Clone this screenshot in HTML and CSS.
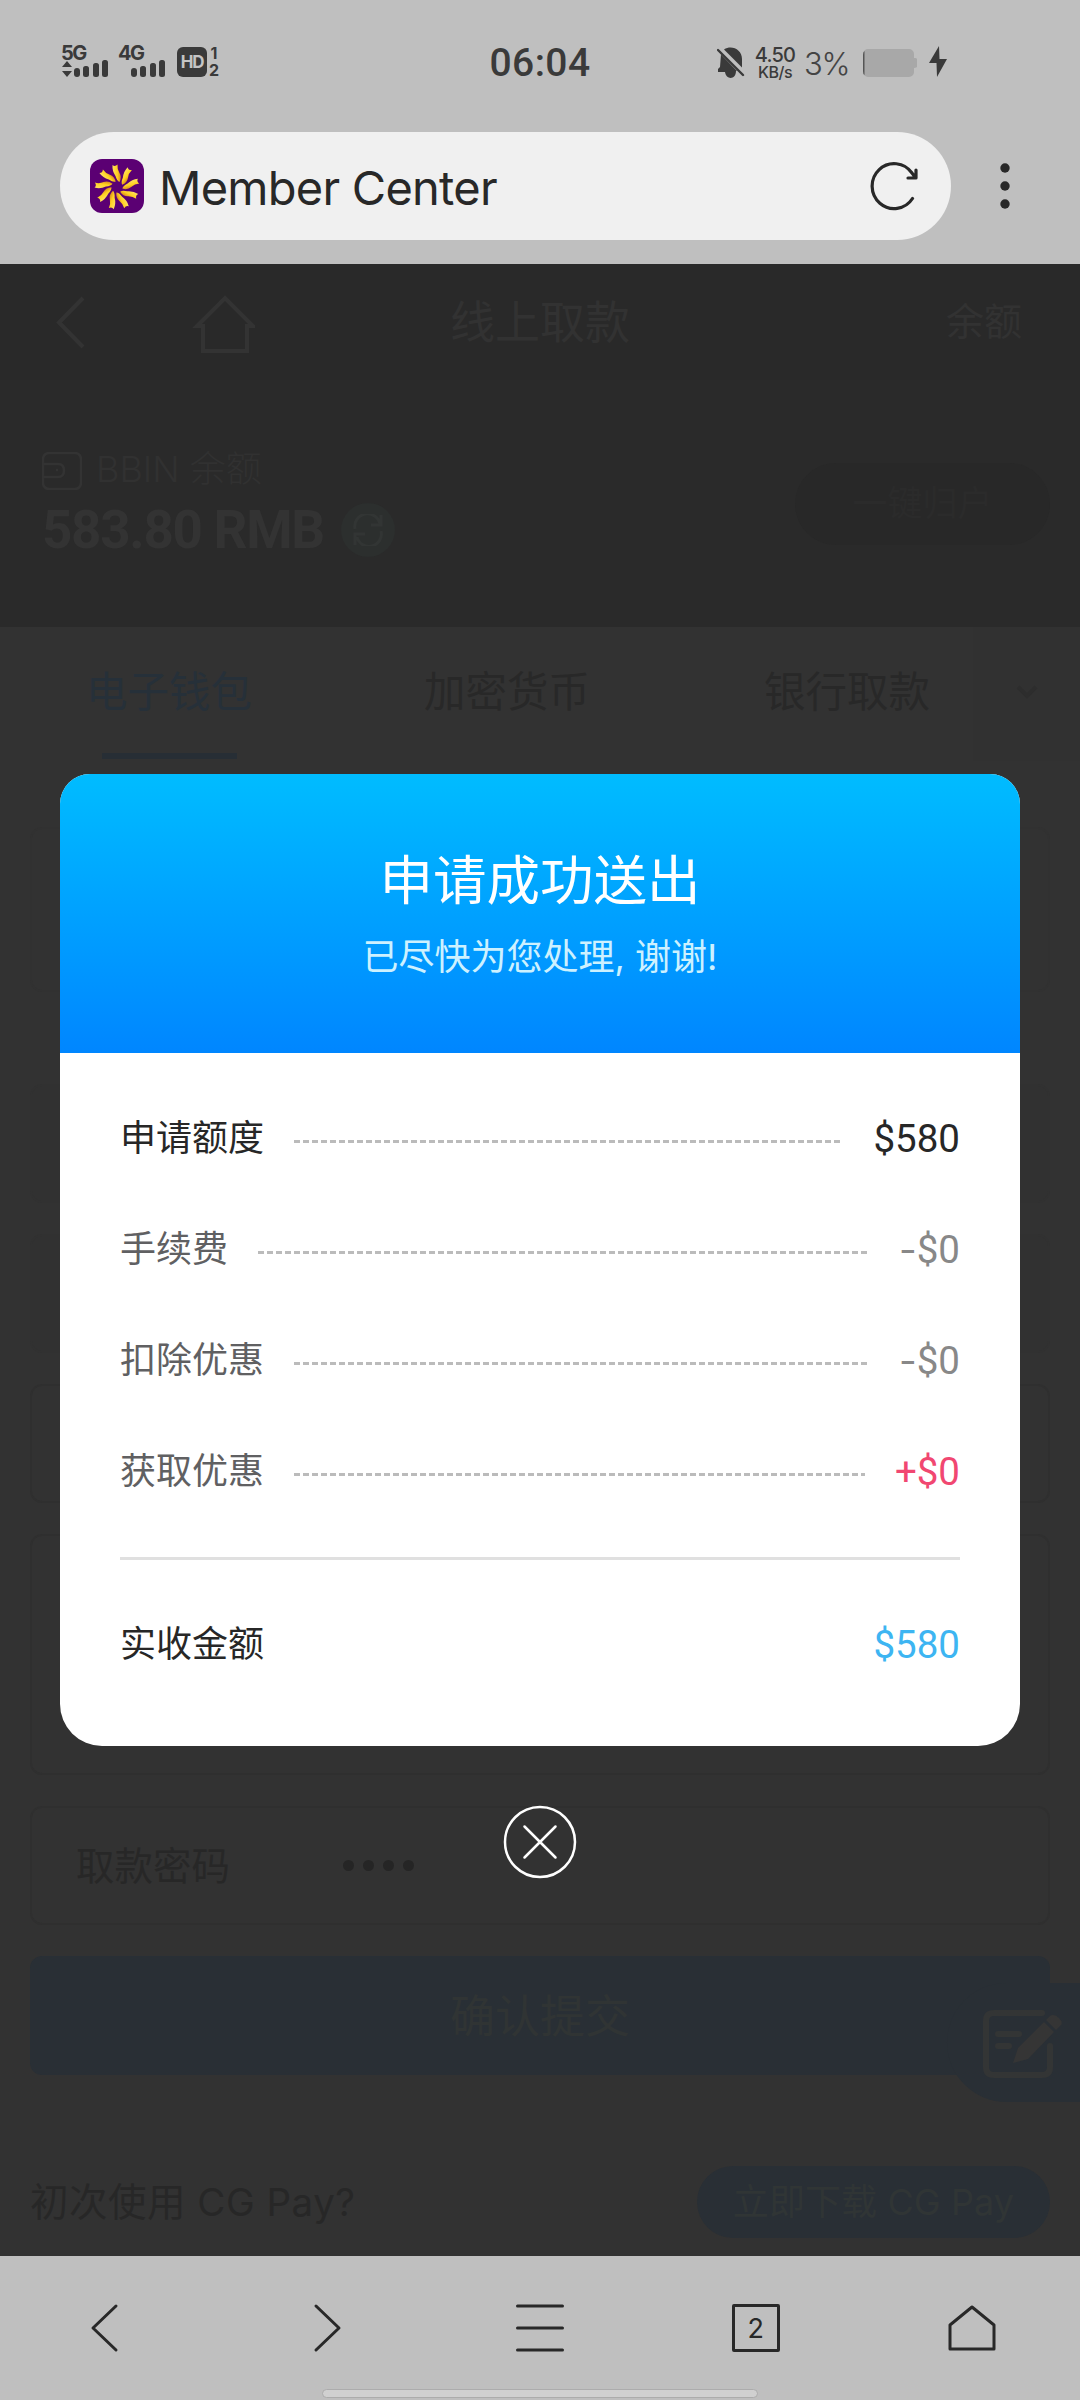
FILE: index.html
```html
<!DOCTYPE html>
<html lang="zh-CN">
<head>
<meta charset="utf-8">
<title>Member Center</title>
<link rel="stylesheet" href="styles.css">
</head>
<body>
<div class="screen">
  <header class="status">
    <div class="signals">
      <div class="signal">
        <span class="net">5G</span>
        <svg width="49" height="20" viewBox="0 0 49 20"><path d="M1 8l5-6 5 6zM1 12l5 6 5-6z"/><rect x="13" y="9" width="6" height="9" rx="3"/><rect x="22" y="7" width="6" height="11" rx="2.5"/><rect x="32" y="4" width="6" height="14" rx="2.5"/><rect x="41" y="1" width="6" height="17" rx="2.5"/></svg>
      </div>
      <div class="signal">
        <span class="net">4G</span>
        <svg width="49" height="20" viewBox="0 0 49 20"><rect x="13" y="9" width="6" height="9" rx="3"/><rect x="22" y="7" width="6" height="11" rx="2.5"/><rect x="32" y="4" width="6" height="14" rx="2.5"/><rect x="41" y="1" width="6" height="17" rx="2.5"/></svg>
      </div>
      <span class="hd">HD</span>
      <div class="sims"><span>1</span><span>2</span></div>
    </div>
    <div class="clock">06:04</div>
    <div class="indicators">
      <svg class="bell" width="28" height="32" viewBox="0 0 28 32"><path d="M7 2.500C15-2.500 25 3 25 12v8.500zM4 7.500L20 24h-1c0 9-10 9-11 1H1v-3l2-2z"/><path d="M1 3L26 28" stroke="#3a3a3a" stroke-width="2.400" stroke-linecap="round"/></svg>
      <div class="rate"><span class="num">4.50</span><span class="unit">KB/s</span></div>
      <span class="percent">3%</span>
      <svg class="battery" width="54" height="28" viewBox="0 0 54 28"><path d="M5 0h41a5 5 0 0 1 5 5v4c4 0 3 1 3 5s1 4-3 5v4a5 5 0 0 1-5 5H5a5 5 0 0 1-5-5V5a5 5 0 0 1 5-5z" fill="#a8a8a8"/><path d="M1.500 2v24q-1.500-1-1.500-4V6q0-3 1.500-4z" fill="#555"/></svg>
      <svg class="bolt" width="18" height="31" viewBox="0 0 18 31"><path d="M10 0L0 17h7.500L8 31 18 13h-7.500z"/></svg>
    </div>
  </header>

  <div class="addressbar">
    <div class="address">
      <svg class="favicon" width="54" height="54" viewBox="0 0 54 54">
        <defs>
          <linearGradient id="ray" x1="0" y1="0" x2="1" y2="0"><stop offset="0" stop-color="#ffe25c"/><stop offset=".6" stop-color="#ffd020"/><stop offset="1" stop-color="#d98a20"/></linearGradient>
          <path id="arm" d="M-4.500-22Q-2-20 .5-22.500Q0-18 2.500-14Q5-10 2.500-5Q0-6-1.500-11Q-5-16-4.500-22z" fill="url(#ray)"/>
        </defs>
        <rect width="54" height="54" rx="12" fill="#5b0073"/>
        <g transform="translate(27 28)"><use href="#arm"/><use href="#arm" transform="rotate(40)"/><use href="#arm" transform="rotate(80)"/><use href="#arm" transform="rotate(120)"/><use href="#arm" transform="rotate(160)"/><use href="#arm" transform="rotate(200)"/><use href="#arm" transform="rotate(240)"/><use href="#arm" transform="rotate(280)"/><use href="#arm" transform="rotate(320)"/></g>
      </svg>
      <span class="sitename">Member Center</span>
      <svg class="reload" width="50" height="50" viewBox="0 0 50 50"><path d="M43.500 37.500A22 22.500 0 1 1 43 12L46 16M47 9v8h-8" /></svg>
    </div>
    <svg class="more" width="10" height="46" viewBox="0 0 10 46"><circle cx="5" cy="5" r="4.700"/><circle cx="5" cy="23" r="4.700"/><circle cx="5" cy="41" r="4.700"/></svg>
  </div>

  <main class="page">
    <nav class="topnav">
      <svg width="210" height="60" viewBox="0 0 210 60"><path d="M38 5L14 29.500 38 54"/><path d="M152 33h6v25h44V33h6L180 5z"/></svg>
      <h1>线上取款</h1>
      <span class="navlink">余额</span>
    </nav>
    <section class="balance">
      <div>
        <div class="wallet">
          <svg width="40" height="38" viewBox="0 0 40 38"><rect x="1" y="1" width="38" height="36" rx="6"/><path d="M1 12h15q6 0 6 6.500t-6 6.500H1M14 18h2"/></svg>
          <span>BBIN 余额</span>
        </div>
        <div class="amount">
          <strong>583.80 RMB</strong>
          <span class="refresh"><svg width="32" height="32" viewBox="0 0 32 32"><path d="M3 15A12 12 0 0 1 28 10M29 1v10H19M29 17A12 12 0 0 1 5 23M3 31V20h10"/></svg></span>
        </div>
      </div>
      <span class="collect">一键归户</span>
    </section>
    <div class="tabs">
      <span class="tab active">电子钱包</span>
      <span class="tab">加密货币</span>
      <span class="tab">银行取款</span>
      <span class="expand"><svg width="22" height="14" viewBox="0 0 22 14"><path d="M2 2l9 9 9-9"/></svg></span>
    </div>
    <div class="form">
      <div class="card notice"></div>
      <div class="card filled"></div>
      <div class="card filled"></div>
      <div class="card"></div>
      <div class="card tall"></div>
      <div class="card password"><span class="label">取款密码</span><span class="pin"><i></i><i></i><i></i><i></i></span></div>
      <div class="submit">确认提交</div>
      <div class="promo"><span class="label">初次使用 CG Pay?</span><span class="download">立即下载 CG Pay</span></div>
    </div>
    <div class="note">
      <svg width="82" height="72" viewBox="0 0 82 72"><path class="frame" d="M60 6H12Q4 6 4 14V60Q4 68 12 68H60Q68 68 68 60V39"/><path class="frame" d="M16 27H37M16 39H27"/><path d="M31 56L36 41 62 15 72 25 46 52zM64 13L68 9Q72 6 77 11T78 19L74 23z"/></svg>
    </div>

    <div class="dialog">
      <div class="dialog-head">
        <h2>申请成功送出</h2>
        <p>已尽快为您处理, 谢谢!</p>
      </div>
      <div class="dialog-body">
        <div class="row strong"><span class="label">申请额度</span><i class="dash"></i><span class="value">$580</span></div>
        <div class="row"><span class="label">手续费</span><i class="dash"></i><span class="value"><span class="sign">-</span>$0</span></div>
        <div class="row"><span class="label">扣除优惠</span><i class="dash"></i><span class="value"><span class="sign">-</span>$0</span></div>
        <div class="row"><span class="label">获取优惠</span><i class="dash"></i><span class="value plus">+$0</span></div>
        <div class="row total"><span class="label">实收金额</span><span class="value">$580</span></div>
      </div>
    </div>
    <svg class="close" width="74" height="74" viewBox="0 0 74 74"><circle cx="37" cy="37" r="35"/><path d="M21.500 21.500l31 31M52.500 21.500l-31 31"/></svg>
  </main>

  <footer class="toolbar">
    <div class="tools">
      <svg width="50" height="50" viewBox="0 0 50 50"><path d="M36 3L13 25l23 22"/></svg>
      <svg width="50" height="50" viewBox="0 0 50 50"><path d="M19 3l23 22-23 22"/></svg>
      <svg width="50" height="50" viewBox="0 0 50 50"><path d="M2.500 3h45M2.500 25h45M2.500 47h45"/></svg>
      <span class="windows">2</span>
      <svg width="50" height="50" viewBox="0 0 50 50"><path d="M3 22L25 4l22 18v24H3z"/></svg>
    </div>
    <div class="homebar"></div>
  </footer>
</div>
</body>
</html>
```
FILE: styles.css
```css
* { box-sizing: border-box; }
body {
  margin: 0;
  font-family: Inter, "Noto Sans CJK SC", sans-serif;
  background: #bfbfbf;
}
svg { display: block; flex: none; }
.screen { width: 1080px; height: 2400px; display: flex; flex-direction: column; overflow: hidden; }

.status {
  height: 132px;
  padding: 45px 133px 0 61px;
  display: grid;
  grid-template-columns: 419px 120px 1fr;
  color: #3a3a3a;
  fill: #3a3a3a;
}
.signals { display: flex; align-items: flex-start; }
.signal { width: 57px; }
.net { display: block; height: 14px; font-size: 20px; line-height: 17px; font-weight: 700; letter-spacing: -1.6px; }
.hd {
  width: 30px; height: 30px; margin: 2px 0 0 2px; border-radius: 6px;
  background: #3a3a3a; color: #c4c4c4;
  font-size: 17px; font-weight: 700; line-height: 30px; text-align: center; letter-spacing: -1.2px;
}
.sims { display: flex; flex-direction: column; margin: 0 0 0 2px; font-size: 16px; font-weight: 700; line-height: 17px; text-align: center; }
.clock { font-family: Roboto, sans-serif; font-size: 39px; line-height: 37px; font-weight: 500; text-align: center; white-space: nowrap; letter-spacing: .4px; }
.indicators { display: flex; align-items: flex-start; padding-left: 117px; }
.bell { margin-top: 2px; }
.rate { width: 42px; margin-left: 9px; display: flex; flex-direction: column; text-align: center; }
.rate .num { font-size: 20px; line-height: 20px; letter-spacing: -.8px; font-weight: 500; }
.rate .unit { font-size: 16px; line-height: 15px; letter-spacing: -.5px; font-weight: 500; }
.percent { width: 49px; margin-left: 8px; font-size: 31px; line-height: 38px; font-weight: 300; letter-spacing: -1.2px; color: #444; white-space: nowrap; }
.battery { margin: 4px 0 0 10px; }
.bolt { margin: 1px 0 0 12px; }

.addressbar { height: 132px; padding: 0 70px 24px 60px; display: flex; align-items: center; justify-content: space-between; }
.address { width: 891px; height: 108px; border-radius: 54px; background: #f0f0f0; display: flex; align-items: center; padding: 0 32px 0 30px; }
.sitename { flex: 1; padding: 3px 0 0 15px; font-size: 47px; font-weight: 400; letter-spacing: -.75px; color: #282828; white-space: nowrap; }
.reload { fill: none; stroke: #282828; stroke-width: 3.2; stroke-linecap: round; stroke-linejoin: round; }
.more { fill: #282828; }

.page { position: relative; height: 1992px; overflow: hidden; background: #323232; }
.topnav { height: 116px; padding: 2px 58px 0 45px; background: #292929; color: #323232; display: grid; grid-template-columns: 300px 1fr 300px; align-items: center; }
.topnav svg { fill: none; stroke: #333; stroke-width: 4; }
.topnav h1 { margin: 0 0 0 13px; font-size: 45px; font-weight: 400; line-height: 60px; text-align: center; }
.navlink { text-align: right; font-size: 38px; line-height: 54px; margin-top: -4px; }
.balance { height: 247px; padding: 65px 30px 0 42px; background: #2a2a2a; display: flex; justify-content: space-between; color: #333; }
.wallet { display: flex; align-items: center; height: 52px; gap: 14px; font-size: 36px; line-height: 52px; font-weight: 300; color: #313131; }
.wallet span { margin-top: -5px; }
.wallet svg { fill: none; stroke: #333; stroke-width: 2.5; }
.amount { display: flex; align-items: center; height: 54px; margin-top: 6px; white-space: nowrap; }
.amount strong { width: 299px; font-family: Roboto, sans-serif; font-size: 53px; font-weight: 700; letter-spacing: -1.3px; }
.refresh { width: 54px; height: 54px; border-radius: 50%; background: #2c2f2e; display: grid; place-items: center; }
.refresh svg { fill: none; stroke: #323534; stroke-width: 3; }
.collect { width: 255px; height: 82px; margin-top: 18px; border-radius: 41px; background: #282828; color: #2b2b2b; font-size: 35px; line-height: 80px; text-align: center; }
.tabs { height: 134px; display: flex; background: #323232; color: #282828; font-size: 41.5px; }
.tab { position: relative; width: 338px; text-align: center; line-height: 131px; white-space: nowrap; }
.tab:nth-child(3) { width: 297px; padding-left: 45px; }
.active { color: #263039; }
.active::after { content: ""; position: absolute; left: 102px; bottom: 2px; width: 135px; height: 6px; background: #272e35; }
.expand { flex: 1; background: #313131; padding: 58px 0 0 43px; }
.expand svg { fill: none; stroke: #2d2d2d; stroke-width: 4; }
.form { padding: 66px 30px 0; }
.card { height: 119px; border: 2px solid #2f2f2f; border-radius: 12px; margin-bottom: 31px; }
.card.filled { background: #313131; border-color: #313131; }
.card.notice { height: 165px; margin-bottom: 92px; border-color: #313131; }
.card.tall { height: 241px; }
.label { position: relative; top: -3px; }
.password { display: flex; align-items: center; padding-left: 44px; font-size: 38.5px; color: #272727; }
.pin { display: flex; gap: 9px; margin-left: 113px; }
.pin i { width: 11px; height: 11px; border-radius: 50%; background: #252525; }
.submit { height: 119px; border-radius: 12px; background: #292f35; color: #303434; font-size: 45px; line-height: 121px; text-align: center; }
.promo { display: flex; justify-content: space-between; align-items: center; margin-top: 91px; height: 72px; color: #272727; font-size: 38.5px; letter-spacing: .5px; white-space: nowrap; }
.download { width: 353px; height: 72px; border-radius: 36px; background: #292f35; color: #303535; font-size: 36px; letter-spacing: .1px; line-height: 72px; text-align: center; }
.note { position: absolute; left: 947px; top: 1719px; width: 133px; height: 119px; border-radius: 60px 0 0 60px; background: #292f35; padding: 24px 0 0 35px; }
.note svg { fill: #353535; }
.note .frame { fill: none; stroke: #333535; stroke-width: 6; stroke-linecap: round; }

.dialog { position: absolute; left: 60px; top: 510px; width: 960px; height: 972px; overflow: hidden; border-radius: 30px 30px 42px 42px; background: #fff; }
.dialog-head { height: 279px; padding-top: 71px; background: linear-gradient(#00bcff, #0086ff); text-align: center; color: #fff; }
.dialog-head h2 { margin: 0; font-size: 53.5px; font-weight: 400; line-height: 72px; }
.dialog-head p { margin: 16px 0 0; font-size: 36px; line-height: 48px; color: #cdf1ff; }
.dialog-body { padding: 29px 60px 0; }
.row { height: 111px; display: flex; align-items: center; font-size: 36px; color: #606062; white-space: nowrap; }
.row .value { position: relative; top: 1px; color: #888; font-family: Roboto, sans-serif; font-size: 38.5px; line-height: 46px; }
.sign { font-family: Inter, sans-serif; }
.row.strong, .row.total { color: #272727; }
.row.strong .value { color: #272727; }
.row .value.plus { color: #f14771; }
.dash { flex: 1; height: 3px; margin: 8px 30px 0; background: repeating-linear-gradient(90deg, #bbb 0 6px, transparent 6px 9px); }
.total { height: 171px; margin-top: 31px; border-top: 3px solid #e0e0e0; justify-content: space-between; }
.row.total .value { color: #3db5f2; }
.close { position: absolute; left: 503px; top: 1541px; fill: none; stroke: #fff; stroke-width: 2.5; stroke-linecap: round; }

.toolbar { height: 144px; background: #bfbfbf; padding-top: 47px; }
.tools { display: flex; justify-content: space-between; padding: 0 83px 0 80px; align-items: center; height: 50px; }
.tools svg { fill: none; stroke: #282828; stroke-width: 3; stroke-linecap: round; stroke-linejoin: round; }
.windows { width: 48px; height: 48px; border: 3px solid #282828; border-radius: 2px; color: #282828; font-size: 27px; line-height: 44px; text-align: center; }
.homebar { width: 436px; height: 9px; margin: 36px auto 0; border: 1px solid #acacac; border-radius: 5px; background: #d0d0d0; }
```
